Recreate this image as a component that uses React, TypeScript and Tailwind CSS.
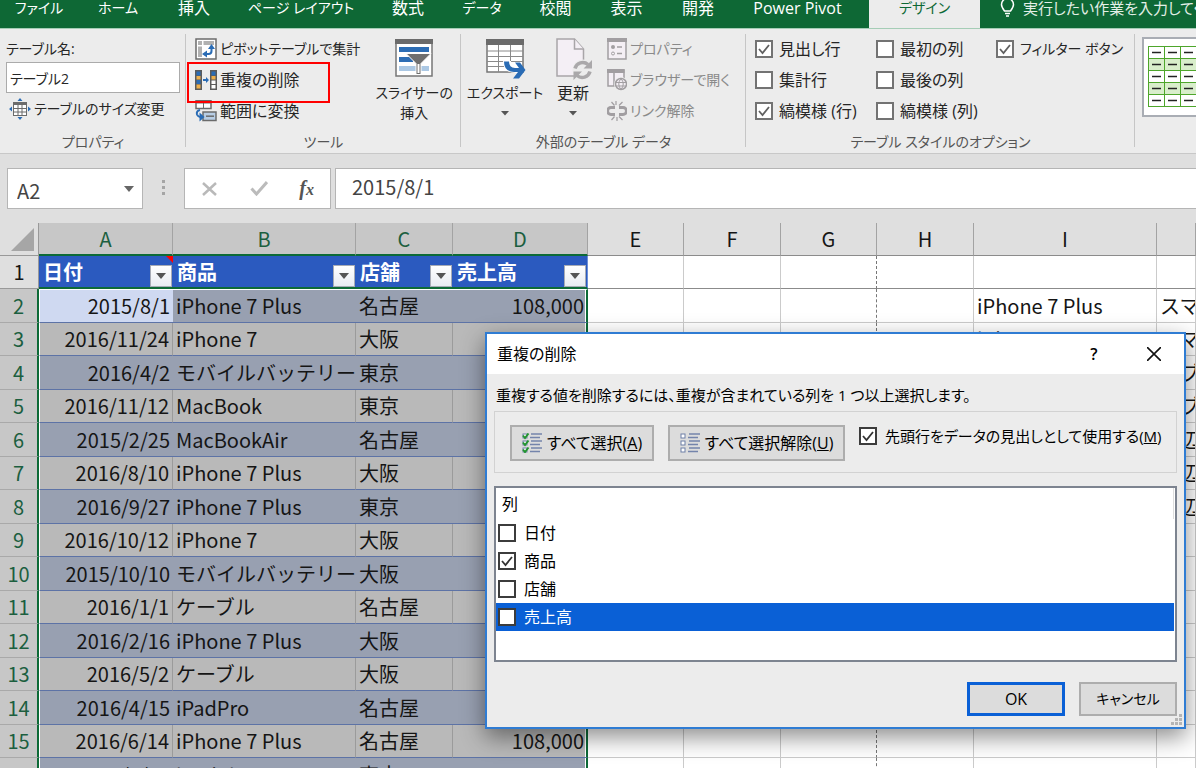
import { useState } from 'react'
import type { ReactNode } from 'react'
import clsx from 'clsx'

const tabs = [
  { name: 'ファイル', width: 'w-[78px]', kana: true },
  { name: 'ホーム', width: 'w-[80px]', kana: true },
  { name: '挿入', width: 'w-[72px]' },
  { name: 'ページ レイアウト', width: 'w-[142px]', kana: true },
  { name: '数式', width: 'w-[72px]' },
  { name: 'データ', width: 'w-[76px]', kana: true },
  { name: '校閲', width: 'w-[71px]' },
  { name: '表示', width: 'w-[71px]' },
  { name: '開発', width: 'w-[72px]' },
  { name: 'Power Pivot', width: 'w-[135px]' },
  { name: 'デザイン', width: 'w-[111px]', kana: true, active: true },
]

const columns = [
  { name: 'A', width: 'w-[134px]', selected: true },
  { name: 'B', width: 'w-[183px]', selected: true },
  { name: 'C', width: 'w-[97px]', selected: true },
  { name: 'D', width: 'w-[135px]', selected: true },
  { name: 'E', width: 'w-[96px]' },
  { name: 'F', width: 'w-[97px]' },
  { name: 'G', width: 'w-[96px]' },
  { name: 'H', width: 'w-[97px]' },
  { name: 'I', width: 'w-[183px]' },
  { name: '', width: '' },
]

const headers = ['日付', '商品', '店舗', '売上高']

// 日付, 商品, 店舗, 売上高, I列, J列
const rows = [
  ['2015/8/1', 'iPhone 7 Plus', '名古屋', '108,000', 'iPhone 7 Plus', 'スマホ'],
  ['2016/11/24', 'iPhone 7', '大阪', '84,000', 'iPhone 7', 'スマホ'],
  ['2016/4/2', 'モバイルバッテリー', '東京', '4,000', 'iPadPro', 'タブレット'],
  ['2016/11/12', 'MacBook', '東京', '148,000', 'iPadAir', 'タブレット'],
  ['2015/2/25', 'MacBookAir', '名古屋', '98,000', 'モバイルバッテリー', '周辺機器'],
  ['2016/8/10', 'iPhone 7 Plus', '大阪', '108,000', 'ケーブル', '周辺機器'],
  ['2016/9/27', 'iPhone 7 Plus', '東京', '108,000', 'ケース', '周辺機器'],
  ['2016/10/12', 'iPhone 7', '大阪', '84,000', '', ''],
  ['2015/10/10', 'モバイルバッテリー', '大阪', '4,000', '', ''],
  ['2016/1/1', 'ケーブル', '名古屋', '2,000', '', ''],
  ['2016/2/16', 'iPhone 7 Plus', '大阪', '108,000', '', ''],
  ['2016/5/2', 'ケーブル', '大阪', '2,000', '', ''],
  ['2016/4/15', 'iPadPro', '名古屋', '78,000', '', ''],
  ['2016/6/14', 'iPhone 7 Plus', '名古屋', '108,000', '', ''],
  ['2016/5/15', 'iPadAir', '東京', '78,000', '', ''],
]

function PivotIcon() {
  return (
    <svg width="22" height="22" viewBox="0 0 22 22">
      <rect x="1" y="1" width="20" height="20" fill="#fff" stroke="#6b6b6b" strokeWidth="1.5" />
      <path d="M3 3h4v4H3zM8.500 3H19v4H8.500zM3 8.500h4V19H3z" fill="#b1b1b1" />
      <path d="M9 16h4.500q3 0 3-3V9" fill="none" stroke="#2a6cb5" strokeWidth="2" />
      <path d="M16.500 6l3.500 5h-7zM7 16l5-3.500v7z" fill="#2a6cb5" />
    </svg>
  )
}

function DuplicatesIcon() {
  return (
    <svg width="22" height="20" viewBox="0 0 22 20">
      <rect width="7" height="20" fill="#5b5b5b" />
      <path d="M1.500 1.500h4v4h-4zM1.500 10h4v4h-4z" fill="#2a6cb5" />
      <path d="M1.500 6h4v3.500h-4zM1.500 14.500h4v4h-4z" fill="#eeb04c" />
      <path d="M8 9h3V7l3 3-3 3v-2H8z" fill="#2a6cb5" />
      <rect x="15" width="7" height="20" fill="#5b5b5b" />
      <path d="M16.500 1.500h4v4h-4z" fill="#2a6cb5" />
      <path d="M16.500 6h4v3.500h-4z" fill="#eeb04c" />
      <path d="M16.500 10.500h4v3.500h-4zM16.500 15h4v3.500h-4z" fill="#fff" />
    </svg>
  )
}

function RangeIcon() {
  return (
    <svg width="22" height="22" viewBox="0 0 22 22">
      <path d="M1 .5h15v8H1z" fill="#fff" stroke="#6b6b6b" strokeWidth="1.500" />
      <path d="M1 .5h15v3H1z" fill="#6b6b6b" />
      <path d="M8.500 3v5" stroke="#6b6b6b" />
      <path d="M8 12h13v8.500H8z" fill="#b7cde5" stroke="#6b6b6b" strokeWidth="1.500" />
      <path d="M11 16.200h8" stroke="#6b6b6b" strokeWidth="1.500" />
      <path d="M5 10q-4 1-3 4.500 1 2.500 4 2.500" fill="none" stroke="#2a6cb5" strokeWidth="2" />
      <path d="M4.500 12.500l5 4.500-5 4.500z" fill="#2a6cb5" />
    </svg>
  )
}

function ResizeIcon() {
  return (
    <svg width="22" height="22" viewBox="0 0 22 22">
      <rect x="4.500" y="4.500" width="13" height="13" fill="#fff" stroke="#6b6b6b" />
      <path d="M4 4h14v3H4z" fill="#6b6b6b" />
      <path d="M4.500 10.500h13M4.500 14h13M9 7v10.500M13 7v10.500" stroke="#6b6b6b" />
      <path d="M11 0l2.500 3h-5zM11 22l2.500-3h-5zM0 11l3-2.500v5zM22 11l-3-2.500v5z" fill="#2a6cb5" />
    </svg>
  )
}

function SlicerIcon() {
  return (
    <svg width="38" height="38" viewBox="0 0 38 38">
      <rect x="1" y="1" width="36" height="36" fill="#fff" stroke="#767676" strokeWidth="1.500" />
      <path d="M0 0h38v5H0z" fill="#6b6b6b" />
      <path d="M4 8h30v5H4zM4 18h14v5H4z" fill="#2d6db4" />
      <path d="M4 27h30v5H4z" fill="#abc8e4" />
      <path d="M11 14.500h25L26 24.500v11h-5v-11z" fill="#6f6f6f" stroke="#fff" />
      <path d="M23.500 25v9" stroke="#fff" strokeWidth="2" />
    </svg>
  )
}

function ExportIcon() {
  return (
    <svg width="42" height="42" viewBox="0 0 42 42">
      <rect x="3" y="1" width="36" height="32" fill="#fff" stroke="#767676" strokeWidth="1.500" />
      <path d="M2 0h38v6H2z" fill="#6b6b6b" />
      <path d="M3 12h36M3 17.500h36M3 22.500h36M3 27.500h36M14.500 6v27M26.500 6v27" stroke="#8a8a8a" fill="none" />
      <path d="M23 22q0 8 9 8h5" fill="none" stroke="#fff" strokeWidth="8" />
      <path d="M20 22.500h5q0 6 6 6.500h4l-4-5.500h5l5.500 7.500-6.500 8.500h-6l5-6.500h-4q-10-.5-10-10.500z" fill="#2a6cb5" />
    </svg>
  )
}

function RefreshIcon() {
  return (
    <svg width="38" height="42" viewBox="0 0 38 42">
      <path d="M3 1h17.500l9 10v27H3z" fill="#f4eff5" stroke="#a8a5a8" strokeWidth="1.500" />
      <path d="M20.500 1v10h9" fill="#f4eff5" stroke="#a8a5a8" strokeWidth="1.500" />
      <circle cx="29" cy="32" r="10.500" fill="#ececec" />
      <path d="M21 30.500a8 8 0 0 1 13-4M36 33.500a8 8 0 0 1-13 4" fill="none" stroke="#aaa8aa" strokeWidth="3.500" />
      <path d="M38 22v8.500h-8.500zM19.500 42v-8.500H28z" fill="#aaa8aa" />
    </svg>
  )
}

function PropertiesIcon() {
  return (
    <svg width="20" height="22" viewBox="0 0 20 22">
      <rect x="1" y="1" width="18" height="20" fill="#f4eff5" stroke="#a19ea1" strokeWidth="1.500" />
      <path d="M0 0h20v4H0z" fill="#a19ea1" />
      <circle cx="6" cy="9" r="2" fill="#a19ea1" />
      <circle cx="6" cy="15.500" r="1.500" fill="none" stroke="#a19ea1" />
      <path d="M10 9h5M10 15.500h5" stroke="#a19ea1" strokeWidth="1.500" />
    </svg>
  )
}

function BrowserIcon() {
  return (
    <svg width="20" height="22" viewBox="0 0 20 22">
      <path d="M1 1h16v16H1z" fill="#f4eff5" stroke="#a19ea1" strokeWidth="1.500" />
      <path d="M0 0h17.500v4H0z" fill="#a19ea1" />
      <path d="M7 4v13" stroke="#a19ea1" strokeWidth="1.500" />
      <circle cx="14" cy="15" r="7" fill="#ececec" />
      <circle cx="14" cy="15" r="5.500" fill="#f4eff5" stroke="#a19ea1" strokeWidth="1.500" />
      <path d="M8.500 13.500h11M8.500 17h11M14 9.500q-4.500 5.500 0 11M14 9.500q4.500 5.500 0 11" fill="none" stroke="#a19ea1" />
    </svg>
  )
}

function UnlinkIcon() {
  return (
    <svg width="20" height="20" viewBox="0 0 20 20">
      <path d="M8 6.500H4a3 3 0 0 0 0 7h4M12 6.500h4a3 3 0 0 1 0 7h-4" fill="none" stroke="#a19ea1" strokeWidth="3" />
      <path d="M4.500 1l3 3.500M9 0v4M15.500 1l-3.500 3.500M4.500 19l3-3.500M10 20v-4M15.500 19l-3.500-3.500" stroke="#a19ea1" strokeWidth="1.200" />
    </svg>
  )
}

function StyleThumbnail() {
  const ys = [0, 12, 24, 36, 48]
  const xs = [0, 16, 32, 48, 64]
  return (
    <svg width="81" height="62" viewBox="0 0 81 62">
      {ys.map((y, i) => (
        <g key={y}>
          <rect x="0" y={y + 0.5} width="81" height="12" fill={i % 2 ? '#d9eecb' : '#fff'} stroke="#4ea62b" />
          {xs.map((x) => (
            <path key={x} d={`M${x + 4} ${y + 6.5}h9`} stroke="#222" strokeWidth="1.500" />
          ))}
        </g>
      ))}
      <path d="M.5 0v61M16.500 0v61M32.500 0v61M48.500 0v61M64.500 0v61" stroke="#4ea62b" />
    </svg>
  )
}

function ListIcon({ checked }: { checked?: boolean }) {
  return (
    <svg width="20" height="20" viewBox="0 0 20 20">
      {[1, 8, 15].map((y) => (
        <g key={y}>
          <rect x="1" y={y} width="4" height="4" fill="#fff" stroke="#6d7ea6" />
          {checked && <path d={`M1 ${y + 1.5}l2 2.500 3.500-4.500`} fill="none" stroke="#23952f" strokeWidth="2" />}
          <path d={`M9 ${y}h11M8 ${y + 3.5}h10`} stroke="#7484ab" strokeWidth="1.500" />
        </g>
      ))}
    </svg>
  )
}

function Caret() {
  return (
    <svg width="8" height="5" viewBox="0 0 8 5">
      <path d="M0 0h8L4 4.500z" fill="#555" />
    </svg>
  )
}

function Check({ children, checked, dark, className }: { children: ReactNode; checked?: boolean; dark?: boolean; className?: string }) {
  return (
    <label className={clsx('flex items-center whitespace-nowrap', className)}>
      <span className="relative size-[18px] shrink-0">
        <input
          type="checkbox"
          defaultChecked={checked}
          className={clsx('peer block size-[18px] appearance-none border-2 bg-white', dark ? 'border-[#3c3c3c]' : 'border-[#737373]')}
        />
        <svg className="pointer-events-none absolute inset-0 hidden peer-checked:block" width="18" height="18" viewBox="0 0 18 18">
          <path d="M4 9l3.500 4L14 5" fill="none" stroke={dark ? '#333' : '#606060'} strokeWidth="1.800" />
        </svg>
      </span>
      {children}
    </label>
  )
}

function Group({ label, className, children }: { label: string; className?: string; children: ReactNode }) {
  return (
    <section className={clsx('relative flex shrink-0 flex-col pt-1', className)}>
      <div className="h-[93px]">{children}</div>
      <h2 className="mt-1 h-[23px] text-center text-sm leading-6 text-[#555]">{label}</h2>
      <span className="absolute top-[5px] right-0 h-[113px] w-px bg-[#c6c6c6]" />
    </section>
  )
}

function Ribbon() {
  const small = 'flex h-[31px] items-center gap-[3px] whitespace-nowrap'
  return (
    <div className="flex overflow-hidden border-b border-[#c8c8c8] bg-[#ececec] text-[#262626]">
      <Group label="プロパティ" className="w-[186px]">
        <label htmlFor="table-name" className="block h-[29px] pl-[6px] text-sm leading-[31px]">テーブル名:</label>
        <input id="table-name" defaultValue="テーブル2" className="ml-[6px] block h-[31px] w-[174px] border border-[#ababab] bg-white px-[3px] text-sm" />
        <button className={clsx(small, 'ml-[9px] text-sm')}><ResizeIcon />テーブルのサイズ変更</button>
      </Group>
      <Group label="ツール" className="w-[275px]">
        <div className="flex justify-between pr-2 pl-[9px]">
          <div>
            <button className={clsx(small, 'text-sm')}><PivotIcon />ピボットテーブルで集計</button>
            <button className={small}><DuplicatesIcon />重複の削除</button>
            <button className={small}><RangeIcon />範囲に変換</button>
          </div>
          <button className="flex flex-col items-center pt-[6px] text-sm leading-5 whitespace-nowrap">
            <SlicerIcon />
            <span className="pt-[6px]">スライサーの<br />挿入</span>
          </button>
        </div>
        <span className="pointer-events-none absolute top-[33px] left-px h-[41px] w-[143px] border-2 border-[#f00]" />
      </Group>
      <Group label="外部のテーブル データ" className="w-[285px]">
        <div className="flex">
          <button className="flex w-[88px] flex-col items-center pt-[6px] text-sm leading-5 whitespace-nowrap">
            <ExportIcon />
            <span className="pt-[2px] pb-2">エクスポート</span>
            <Caret />
          </button>
          <button className="flex w-[48px] flex-col items-center pt-[5px] leading-5 whitespace-nowrap">
            <RefreshIcon />
            <span className="pt-[3px] pb-2">更新</span>
            <Caret />
          </button>
          <div className="pl-[10px] text-sm text-[#8a8a8a]">
            <button className={small}><PropertiesIcon />プロパティ</button>
            <button className={small}><BrowserIcon />ブラウザーで開く</button>
            <button className={small}><UnlinkIcon />リンク解除</button>
          </div>
        </div>
      </Group>
      <Group label="テーブル スタイルのオプション" className="w-[389px]">
        <div className="grid grid-flow-col grid-cols-[121px_120px_1fr] grid-rows-[31px_31px_31px] pl-[9px]">
          <Check checked className="gap-[6px]">見出し行</Check>
          <Check className="gap-[6px]">集計行</Check>
          <Check checked className="gap-[6px]">縞模様 (行)</Check>
          <Check className="gap-[6px]">最初の列</Check>
          <Check className="gap-[6px]">最後の列</Check>
          <Check className="gap-[6px]">縞模様 (列)</Check>
          <Check checked className="gap-[6px] text-sm">フィルター ボタン</Check>
        </div>
      </Group>
      <button aria-label="テーブル スタイル" className="mt-2 ml-[7px] flex h-20 shrink-0 items-center border-2 border-[#a9adb4] bg-white px-1">
        <StyleThumbnail />
      </button>
    </div>
  )
}

function FormulaBar() {
  return (
    <div className="flex h-[69px] items-start bg-[#dfdfdf] pt-[14px] pl-[7px] text-xl text-[#444]">
      <div className="flex h-[41px] w-[136px] items-center border border-[#b5b5b5] bg-white pr-2">
        <input aria-label="名前ボックス" defaultValue="A2" className="min-w-0 flex-1 pt-1 pl-[9px]" />
        <svg width="10" height="6" viewBox="0 0 10 6"><path d="M0 0h10L5 6z" fill="#666" /></svg>
      </div>
      <svg className="mx-[18px] mt-[12px]" width="5" height="15" viewBox="0 0 5 15">
        <path d="M1 0h3v3H1zM1 6h3v3H1zM1 12h3v3H1z" fill="#a5a5a5" />
      </svg>
      <div className="flex h-[41px] w-[147px] items-center justify-between border border-[#b5b5b5] bg-white px-4">
        <button aria-label="キャンセル">
          <svg width="17" height="14" viewBox="0 0 17 14"><path d="M2 1l13 12M15 1L2 13" stroke="#b9b9b9" strokeWidth="2.500" /></svg>
        </button>
        <button aria-label="入力">
          <svg width="18" height="15" viewBox="0 0 18 15"><path d="M1.500 7.500L6.500 13 17 1" fill="none" stroke="#bbb" strokeWidth="3" /></svg>
        </button>
        <button className="font-['Liberation_Serif',serif] leading-6 font-bold text-[#555] italic">f<span className="text-base">x</span></button>
      </div>
      <input aria-label="数式バー" defaultValue="2015/8/1" className="ml-1 h-[41px] min-w-0 flex-1 border border-r-0 border-[#b5b5b5] bg-white pb-1 pl-4" />
    </div>
  )
}

function FilterButton({ name }: { name: string }) {
  return (
    <button aria-label={`${name} フィルター`} className="mt-2 flex size-[22px] items-center justify-center border border-[#a7abb5] bg-linear-to-b from-white to-[#e9ecf2]">
      <svg width="10" height="6" viewBox="0 0 10 6"><path d="M0 0h10L5 6z" fill="#555" /></svg>
    </button>
  )
}

// H列の手前は改ページの破線
const grid = (col: string) =>
  col === 'G' ? 'border-r [border-right-style:dashed] border-r-[#777]' : 'border-r border-r-[#cbcbcb]'

function Sheet() {
  return (
    <table className="w-full table-fixed border-separate border-spacing-0 text-xl leading-6 whitespace-nowrap text-[#151515]">
      <colgroup>
        <col className="w-[39px]" />
        {columns.map((c) => <col key={c.name} className={c.width} />)}
      </colgroup>
      <thead>
        <tr className="h-[33px]">
          <th className="border-r border-b border-[#999] bg-[#dfdfdf] p-0">
            <svg className="ml-[11px]" width="23" height="23" viewBox="0 0 23 23"><path d="M23 0v23H0z" fill="#a6a6a6" /></svg>
          </th>
          {columns.map((c) => (
            <th
              key={c.name}
              className={clsx(
                'border-r border-r-[#a3a3a3] p-0 font-normal',
                c.selected ? 'border-b-2 border-b-[#0d6a37] bg-[#c7c7c7] text-[#1c5f3f]' : 'border-b border-b-[#8b8b8b] bg-[#dfdfdf]',
              )}
            >
              {c.name}
            </th>
          ))}
        </tr>
      </thead>
      <tbody>
        <tr className="h-[33px]">
          <th className="border-r border-b border-[#999] bg-[#dfdfdf] p-0 font-normal">1</th>
          {headers.map((h, i) => (
            <th key={h} className={clsx('relative border-b-2 border-b-[#0d6a37] bg-[#2b5abf] p-0 text-white', i === 3 && 'border-r border-r-[#6e8fd6]')}>
              <div className="flex items-center justify-between pr-px pl-1">
                {h}
                <FilterButton name={h} />
              </div>
              {i === 0 && (
                <svg className="absolute top-0 right-0" width="7" height="7" viewBox="0 0 7 7"><path d="M0 0h7v7z" fill="#f00" /></svg>
              )}
            </th>
          ))}
          {columns.slice(4).map((c) => <td key={c.name} className={clsx('border-b border-b-[#8b8b8b] bg-white p-0', grid(c.name))} />)}
        </tr>
        {rows.map((row, r) => {
          const striped = r % 2 === 0
          return (
            <tr key={r} className={striped ? 'h-[34px]' : 'h-[33px]'}>
              <th className="border-r-2 border-b border-r-[#0d6a37] border-b-[#a9a9a9] bg-[#c7c7c7] p-0 font-normal text-[#1c5f3f]">{r + 2}</th>
              {row.slice(0, 4).map((value, i) => (
                <td
                  key={i}
                  className={clsx(
                    'border-b border-b-[#5d73a6] p-0',
                    r === 0 && i === 0 ? 'bg-[#cfd9f1]' : striped ? 'bg-[#98a0b1]' : 'bg-[#b9b9b9]',
                    i === 0 && 'border-l border-l-white pr-[3px] text-right',
                    i > 0 && i < 3 && 'pl-[3px]',
                    i === 3 && 'border-r-2 border-r-[#0d6a37] pr-[2px] text-right shadow-[inset_-1px_0_#fff]',
                    i < 3 && !striped && 'border-r border-r-[#9b9b9b]',
                    r === 0 && 'border-t border-t-white',
                  )}
                >
                  {value}
                </td>
              ))}
              {columns.slice(4).map((c) => (
                <td key={c.name} className={clsx('overflow-hidden border-b border-b-[#cbcbcb] bg-white p-0 pl-[3px]', grid(c.name))}>
                  {c.name === 'I' ? row[4] : c.name === '' ? row[5] : ''}
                </td>
              ))}
            </tr>
          )
        })}
      </tbody>
    </table>
  )
}

function Dialog() {
  const [current, setCurrent] = useState('売上高')
  const button = 'flex shrink-0 items-center justify-center border-2 border-[#adadad] bg-[#dcdcdc] whitespace-nowrap'
  return (
    <div
      role="dialog"
      aria-label="重複の削除"
      className="absolute top-[332px] left-[485px] w-[701px] border-2 border-[#2f7cd3] bg-[#ececec] text-black shadow-[0_8px_22px_rgba(0,0,0,0.45)]"
    >
      <div className="flex h-10 items-center bg-white pl-[10px]">
        <h1 className="flex-1">重複の削除</h1>
        <button className="w-[60px] font-semibold">?</button>
        <button aria-label="閉じる" className="flex w-[60px] justify-center">
          <svg width="14" height="14" viewBox="0 0 14 14"><path d="M0 0l14 14M14 0L0 14" stroke="#111" strokeWidth="1.600" /></svg>
        </button>
      </div>
      <div className="px-[7px] pb-[11px]">
        <p className="h-[37px] pl-[2px] text-[15px] leading-[42px] whitespace-nowrap">重複する値を削除するには、重複が含まれている列を 1 つ以上選択します。</p>
        <div className="flex h-[62px] items-start gap-[14px] border border-[#d2d2d2] pt-[13px] pl-[15px]">
          <button className={clsx(button, 'h-9 w-[144px] gap-[5px]')}>
            <ListIcon checked /><span>すべて選択(<u>A</u>)</span>
          </button>
          <button className={clsx(button, 'h-9 w-[177px] gap-[5px]')}>
            <ListIcon /><span>すべて選択解除(<u>U</u>)</span>
          </button>
          <Check checked dark className="gap-2 text-[15px]"><span>先頭行をデータの見出しとして使用する(<u>M</u>)</span></Check>
        </div>
        <div className="mt-[13px] h-[176px] border-2 border-[#7d8490] bg-white pr-px">
          <div className="h-[31px] border-r border-[#dedede] pl-[6px] leading-[32px]">列</div>
          {headers.map((h) => (
            <div key={h} onClick={() => setCurrent(h)} className={clsx('flex h-7 pl-[2px]', current === h && 'bg-[#0a60d6] text-white')}>
              <Check dark checked={h === '商品'} className="gap-2">{h}</Check>
            </div>
          ))}
        </div>
        <div className="mt-5 flex justify-end gap-[14px]">
          <button className="flex h-[34px] w-[98px] items-center justify-center border-3 border-[#0a60d6] bg-[#dcdcdc]">OK</button>
          <button className={clsx(button, 'h-[34px] w-[98px] text-sm')}>キャンセル</button>
        </div>
      </div>
      <svg className="absolute right-[2px] bottom-[2px]" width="11" height="11" viewBox="0 0 11 11">
        <path d="M8 0h3v3H8zM8 4h3v3H8zM8 8h3v3H8zM4 4h3v3H4zM4 8h3v3H4zM0 8h3v3H0z" fill="#b5b5b5" />
      </svg>
    </div>
  )
}

export default function App() {
  return (
    <div className="relative h-screen overflow-hidden bg-white font-['Noto_Sans_CJK_JP',sans-serif] text-base">
      <div className="font-['Open_Sans','Noto_Sans_CJK_JP',sans-serif] [font-feature-settings:'palt']">
        <nav className="flex h-7 bg-[#0e6835] text-white">
          {tabs.map((t) => (
            <button
              key={t.name}
              className={clsx(
                'flex shrink-0 justify-center leading-4 whitespace-nowrap',
                t.width,
                t.kana && 'text-sm leading-4',
                t.active ? 'bg-[#ececec] text-[#0e6835]' : t.name === 'Power Pivot' && 'pr-2',
              )}
            >
              {t.name}
            </button>
          ))}
          <label className="flex min-w-0 flex-1 items-start gap-2 overflow-hidden pl-5 text-[15px] leading-4">
            <svg className="shrink-0" width="15" height="17" viewBox="0 0 15 17">
              <path d="M4.500 11Q1.500 7 1.500 4.500a6 6 0 0 1 12 0Q13.500 7 10.500 11zM5 13.500h5M6 16h3" fill="none" stroke="#fff" strokeWidth="1.500" />
            </svg>
            <span className="whitespace-nowrap text-[#e3efe7]">実行したい作業を入力してください</span>
          </label>
        </nav>
        <div className="h-px bg-[#a5cdb6]" />
        <Ribbon />
      </div>
      <FormulaBar />
      <Sheet />
      <div className="font-['Open_Sans','Noto_Sans_CJK_JP',sans-serif] [font-feature-settings:'palt']">
        <Dialog />
      </div>
    </div>
  )
}
